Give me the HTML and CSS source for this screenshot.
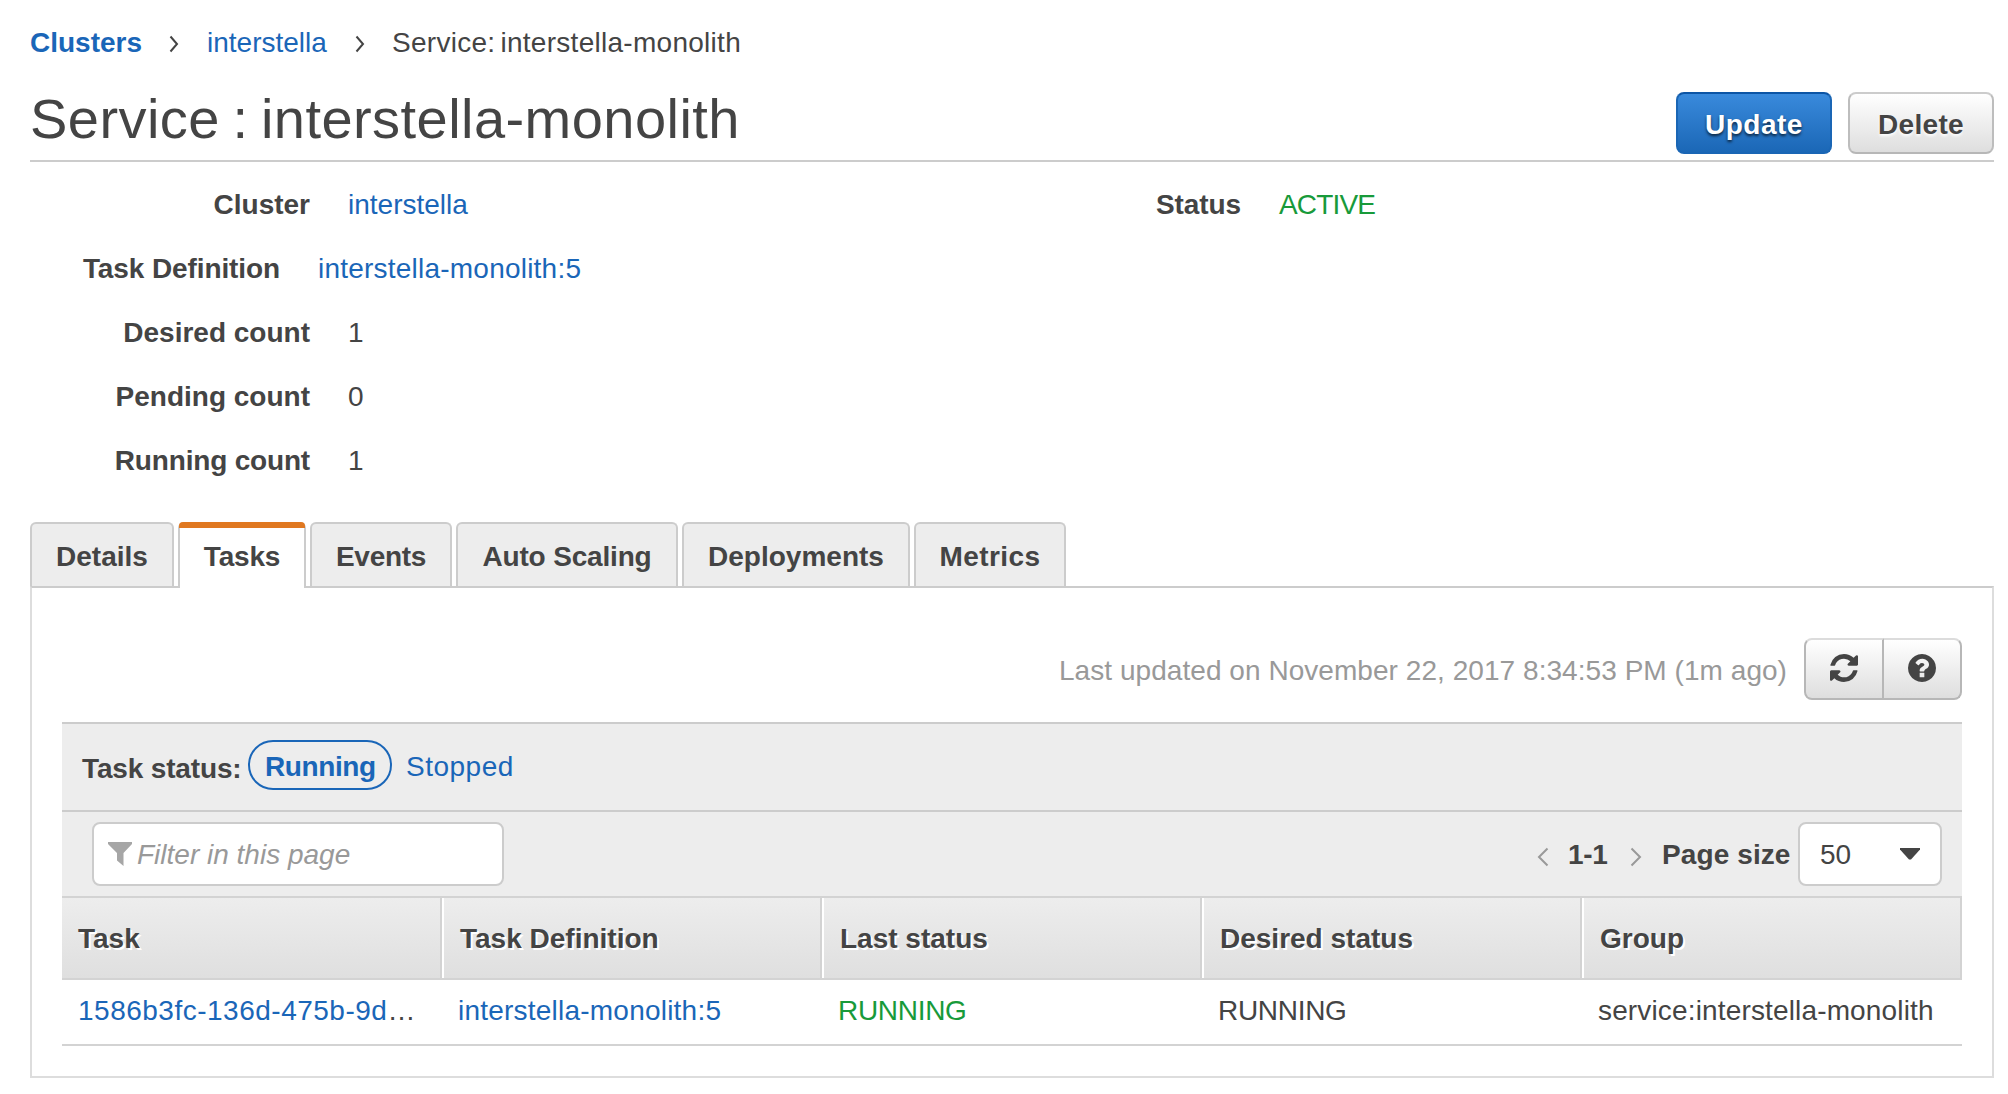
FILE: index.html
```html
<!DOCTYPE html>
<html lang="en">
<head>
<meta charset="utf-8">
<title>Service : interstella-monolith</title>
<link rel="stylesheet" href="styles.css">
</head>
<body>
<main class="page">
  <nav class="breadcrumb">
    <a class="crumb-root" href="#">Clusters</a>
    <svg class="crumb-sep" viewBox="0 0 10 18"><path d="M1.5 1.5 L8 9 L1.5 16.5"/></svg>
    <a class="crumb-mid" href="#">interstella</a>
    <svg class="crumb-sep" viewBox="0 0 10 18"><path d="M1.5 1.5 L8 9 L1.5 16.5"/></svg>
    <span class="crumb-current">Service: interstella-monolith</span>
  </nav>

  <header class="header">
    <h1 class="title">Service : interstella-monolith</h1>
    <div class="actions">
      <button class="btn btn-primary">Update</button>
      <button class="btn btn-default">Delete</button>
    </div>
  </header>

  <section class="details">
    <dl class="facts">
      <div class="fact"><dt>Cluster</dt><dd><a href="#">interstella</a></dd></div>
      <div class="fact fact-narrow"><dt>Task Definition</dt><dd><a class="spaced" href="#">interstella-monolith:5</a></dd></div>
      <div class="fact"><dt>Desired count</dt><dd>1</dd></div>
      <div class="fact"><dt>Pending count</dt><dd>0</dd></div>
      <div class="fact"><dt class="tight">Running count</dt><dd>1</dd></div>
    </dl>
    <dl class="facts facts-status">
      <div class="fact"><dt>Status</dt><dd class="active-state">ACTIVE</dd></div>
    </dl>
  </section>

  <nav class="tabs">
    <a class="tab tab-details" href="#">Details</a>
    <a class="tab tab-tasks selected" href="#">Tasks</a>
    <a class="tab tab-events" href="#">Events</a>
    <a class="tab tab-scaling" href="#">Auto Scaling</a>
    <a class="tab tab-deployments" href="#">Deployments</a>
    <a class="tab tab-metrics" href="#">Metrics</a>
  </nav>

  <section class="panel">
    <div class="toolbar">
      <span class="updated">Last updated on November 22, 2017 8:34:53 PM (1m ago)</span>
      <div class="btn-group">
        <button class="icon-btn" aria-label="Refresh"><svg viewBox="0 0 1536 1536"><path d="M1511 928q0 5-1 7-64 268-268 434.500t-478 166.500q-146 0-282.500-55t-243.500-157l-129 129q-19 19-45 19t-45-19-19-45v-448q0-26 19-45t45-19h448q26 0 45 19t19 45-19 45l-137 137q71 66 161 102t187 36q134 0 250-65t186-179q11-17 53-117 8-23 30-23h192q13 0 22.500 9.500t9.500 22.500zm25-800v448q0 26-19 45t-45 19h-448q-26 0-45-19t-19-45 19-45l138-138q-148-137-349-137-134 0-250 65t-186 179q-11 17-53 117-8 23-30 23h-199q-13 0-22.500-9.500t-9.500-22.500v-7q65-268 270-434.500t480-166.500q146 0 284 55.500t245 156.500l130-129q19-19 45-19t45 19 19 45z"/></svg></button>
        <button class="icon-btn" aria-label="Help"><svg viewBox="0 0 1536 1536"><path d="M896 1248v-192q0-14-9-23t-23-9h-192q-14 0-23 9t-9 23v192q0 14 9 23t23 9h192q14 0 23-9t9-23zm256-672q0-88-55.500-163t-138.500-116-170-41q-243 0-371 213-15 24 8 42l132 100q7 6 19 6 16 0 25-12 53-68 86-92 34-24 86-24 48 0 85.500 26t37.500 59q0 38-20 61t-68 45q-63 28-115.500 86.500t-52.500 125.500v36q0 14 9 23t23 9h192q14 0 23-9t9-23q0-19 21.500-49.500t54.500-49.500q32-18 49-28.500t46-35 44.500-48 28-60.500 12.500-81zm384 192q0 209-103 385.500t-279.500 279.500-385.500 103-385.500-103-279.500-279.500-103-385.500 103-385.500 279.500-279.500 385.500-103 385.500 103 279.500 279.500 103 385.500z"/></svg></button>
      </div>
    </div>

    <div class="status-bar">
      <span class="status-label">Task status:</span>
      <a class="pill" href="#">Running</a>
      <a class="stopped" href="#">Stopped</a>
    </div>

    <div class="filter-bar">
      <div class="filter">
        <svg class="funnel" viewBox="0 0 24 24"><path d="M0 0H24V2L15.500 11V24L9 18.500V11L0 2Z"/></svg>
        <span>Filter in this page</span>
      </div>
      <div class="pager">
        <svg class="page-arrow" viewBox="0 0 12 20"><path d="M10.500 1.500 L2 10 L10.500 18.500"/></svg>
        <span class="range">1-1</span>
        <svg class="page-arrow" viewBox="0 0 12 20"><path d="M1.500 1.500 L10 10 L1.500 18.500"/></svg>
        <span class="size-label">Page size</span>
        <div class="select"><span>50</span><svg class="caret" viewBox="0 0 20 12"><path d="M0 0H20V1.500L11 11.500H9L0 1.500Z"/></svg></div>
      </div>
    </div>

    <table class="grid">
      <thead>
        <tr><th>Task</th><th>Task Definition</th><th>Last status</th><th>Desired status</th><th>Group</th></tr>
      </thead>
      <tbody>
        <tr>
          <td><a class="task-id" href="#">1586b3fc-136d-475b-9d</a>…</td>
          <td><a class="spaced" href="#">interstella-monolith:5</a></td>
          <td class="state running">RUNNING</td>
          <td class="state">RUNNING</td>
          <td class="group">service:interstella-monolith</td>
        </tr>
      </tbody>
    </table>
  </section>
</main>
</body>
</html>
```
FILE: styles.css
```css
* { box-sizing: border-box; }

body {
  margin: 0;
  background: #fff;
  color: #444;
  font: 28px/31px "Liberation Sans", Arial, sans-serif;
}

a { color: #1a66b8; text-decoration: none; }
svg { display: block; flex: none; }
button { font: inherit; color: inherit; margin: 0; padding: 0; }
.spaced { letter-spacing: 0.22px; }

.page { padding: 27px 14px 0 30px; }

/* Breadcrumb */
.breadcrumb { display: flex; height: 31px; white-space: nowrap; }
.crumb-root { font-weight: bold; width: 139px; }
.crumb-sep { width: 10px; height: 18px; margin-top: 8px; fill: none; stroke: #444; stroke-width: 2; }
.crumb-mid { width: 148px; margin-left: 28px; }
.crumb-current { margin-left: 27px; letter-spacing: 0.28px; word-spacing: -3px; }

/* Title row */
.header {
  display: flex;
  justify-content: space-between;
  height: 104px;
  border-bottom: 2px solid #ccc;
}
.title {
  margin: 0;
  padding-top: 29px;
  font-size: 56px;
  line-height: 63px;
  font-weight: normal;
  letter-spacing: 0.45px;
  word-spacing: -3.5px;
}
.actions { display: flex; gap: 16px; padding-top: 34px; }
.btn {
  height: 62px;
  border: 2px solid;
  border-radius: 8px;
  font-weight: bold;
  padding-top: 2px;
}
.btn-primary {
  width: 156px;
  color: #fff;
  letter-spacing: 0.5px;
  background: linear-gradient(#3a8bdd, #1a66b5) border-box;
  border-color: #0c55a5 #1a66b5 #1a66b5;
  text-shadow: 0 2px 3px rgba(0, 0, 0, 0.7);
}
.btn-default {
  width: 146px;
  letter-spacing: 0.3px;
  background: linear-gradient(#fff, #dedede);
  border-color: #ccc #bdbdbd #b7b7b7;
  text-shadow: 0 2px 3px #fff;
}

/* Service details */
.details { display: flex; padding-top: 27px; height: 360px; }
.facts { display: flex; flex-direction: column; gap: 33px; margin: 0; width: 1125px; }
.facts-status { width: auto; }
.fact { display: flex; gap: 38px; white-space: nowrap; }
.fact dt { width: 280px; text-align: right; font-weight: bold; }
.fact dd { margin: 0; }
.fact-narrow dt { width: 250px; letter-spacing: -0.1px; }
.fact .tight { letter-spacing: -0.18px; }
.facts-status dt { width: 86px; letter-spacing: -0.1px; }
.active-state { color: #189a3a; letter-spacing: -0.85px; }

/* Tabs */
.tabs { display: flex; gap: 4px; height: 64px; }
.tab {
  height: 64px;
  padding-top: 17px;
  border: 2px solid #ccc;
  border-bottom: 0;
  border-radius: 6px 6px 0 0;
  background: #ededed;
  color: #444;
  font-weight: bold;
  text-align: center;
}
.tab-details { width: 144px; }
.tab-tasks { width: 128px; letter-spacing: -0.2px; }
.tab-events { width: 142px; letter-spacing: -0.3px; }
.tab-scaling { width: 222px; letter-spacing: -0.18px; }
.tab-deployments { width: 228px; }
.tab-metrics { width: 152px; letter-spacing: 0.4px; }
.tab.selected {
  position: relative;
  z-index: 1;
  height: 66px;
  padding-top: 0;
  border-top: 0;
  background: #fff;
}
.tab.selected::before {
  content: "";
  display: block;
  height: 6px;
  margin: 0 -1px 13px;
  border-radius: 4px 4px 0 0;
  background: #e07820;
}

/* Panel */
.panel {
  height: 492px;
  padding: 50px 30px 0;
  border: 2px solid #ddd;
  border-top-color: #ccc;
}
.toolbar { display: flex; justify-content: flex-end; gap: 17px; height: 84px; }
.updated { padding-top: 17px; color: #999; letter-spacing: 0.05px; white-space: nowrap; }
.btn-group { display: flex; height: 62px; }
.icon-btn {
  display: flex;
  justify-content: center;
  width: 80px;
  padding-top: 14px;
  border: 2px solid;
  border-color: #dcdcdc #b7b7b7 #b7b7b7;
  background: linear-gradient(#fff, #dedede);
}
.icon-btn svg { width: 28px; height: 28px; fill: #444; }
.icon-btn:first-child { border-radius: 8px 0 0 8px; }
.icon-btn:last-child { width: 78px; border-left: 0; border-radius: 0 8px 8px 0; }

.status-bar {
  display: flex;
  height: 90px;
  padding: 16px 0 0 20px;
  border: solid #ccc;
  border-width: 2px 0;
  background: #ededed;
}
.status-label { width: 166px; padding-top: 13px; font-weight: bold; letter-spacing: -0.15px; }
.pill {
  width: 144px;
  height: 50px;
  padding: 9px 0 0 15px;
  border: 2px solid #1a66b8;
  border-radius: 25px;
  font-weight: bold;
  letter-spacing: -0.4px;
}
.stopped { padding: 11px 0 0 14px; letter-spacing: 0.5px; }

.filter-bar {
  display: flex;
  justify-content: space-between;
  height: 86px;
  padding: 10px 20px 0 30px;
  border-bottom: 2px solid #d3d3d3;
  background: #ededed;
}
.filter {
  display: flex;
  width: 412px;
  height: 64px;
  padding: 15px 0 0 14px;
  border: 2px solid #ccc;
  border-radius: 8px;
  background: #fff;
  color: #999;
  font-style: italic;
}
.funnel { width: 24px; height: 24px; margin: 3px 5px 0 0; fill: #a6a6a6; }
.pager { display: flex; font-weight: bold; }
.pager > span { padding-top: 17px; }
.page-arrow { width: 12px; height: 20px; margin-top: 25px; fill: none; stroke: #999; stroke-width: 2; }
.range { width: 62px; margin-left: 19px; letter-spacing: -0.3px; }
.size-label { width: 136px; margin-left: 20px; letter-spacing: 0.1px; }
.select {
  display: flex;
  justify-content: space-between;
  width: 144px;
  height: 64px;
  padding: 15px 20px 0;
  border: 2px solid #ccc;
  border-radius: 8px;
  background: #fff;
  font-weight: normal;
}
.caret { width: 20px; height: 12px; margin-top: 9px; fill: #444; }

/* Task table */
.grid { width: 1900px; table-layout: fixed; border-collapse: separate; border-spacing: 0; }
.grid th, .grid td { padding: 0; text-align: left; vertical-align: top; white-space: nowrap; }
.grid th {
  height: 82px;
  padding: 25px 0 0 18px;
  border: solid #d3d3d3;
  border-width: 0 2px 2px 0;
  background: linear-gradient(#ededed, #dfdfdf);
  box-shadow: inset 2px 0 #fff;
  text-shadow: 2px 2px 0 #fff;
}
.grid th:first-child { box-shadow: none; padding-left: 16px; }
.grid td { height: 66px; padding: 15px 0 0 16px; border-bottom: 2px solid #d3d3d3; }
.task-id { letter-spacing: 0.5px; }
.grid .state { letter-spacing: -0.3px; }
.grid .running { color: #189a3a; }
.grid .group { letter-spacing: 0.15px; }
```
